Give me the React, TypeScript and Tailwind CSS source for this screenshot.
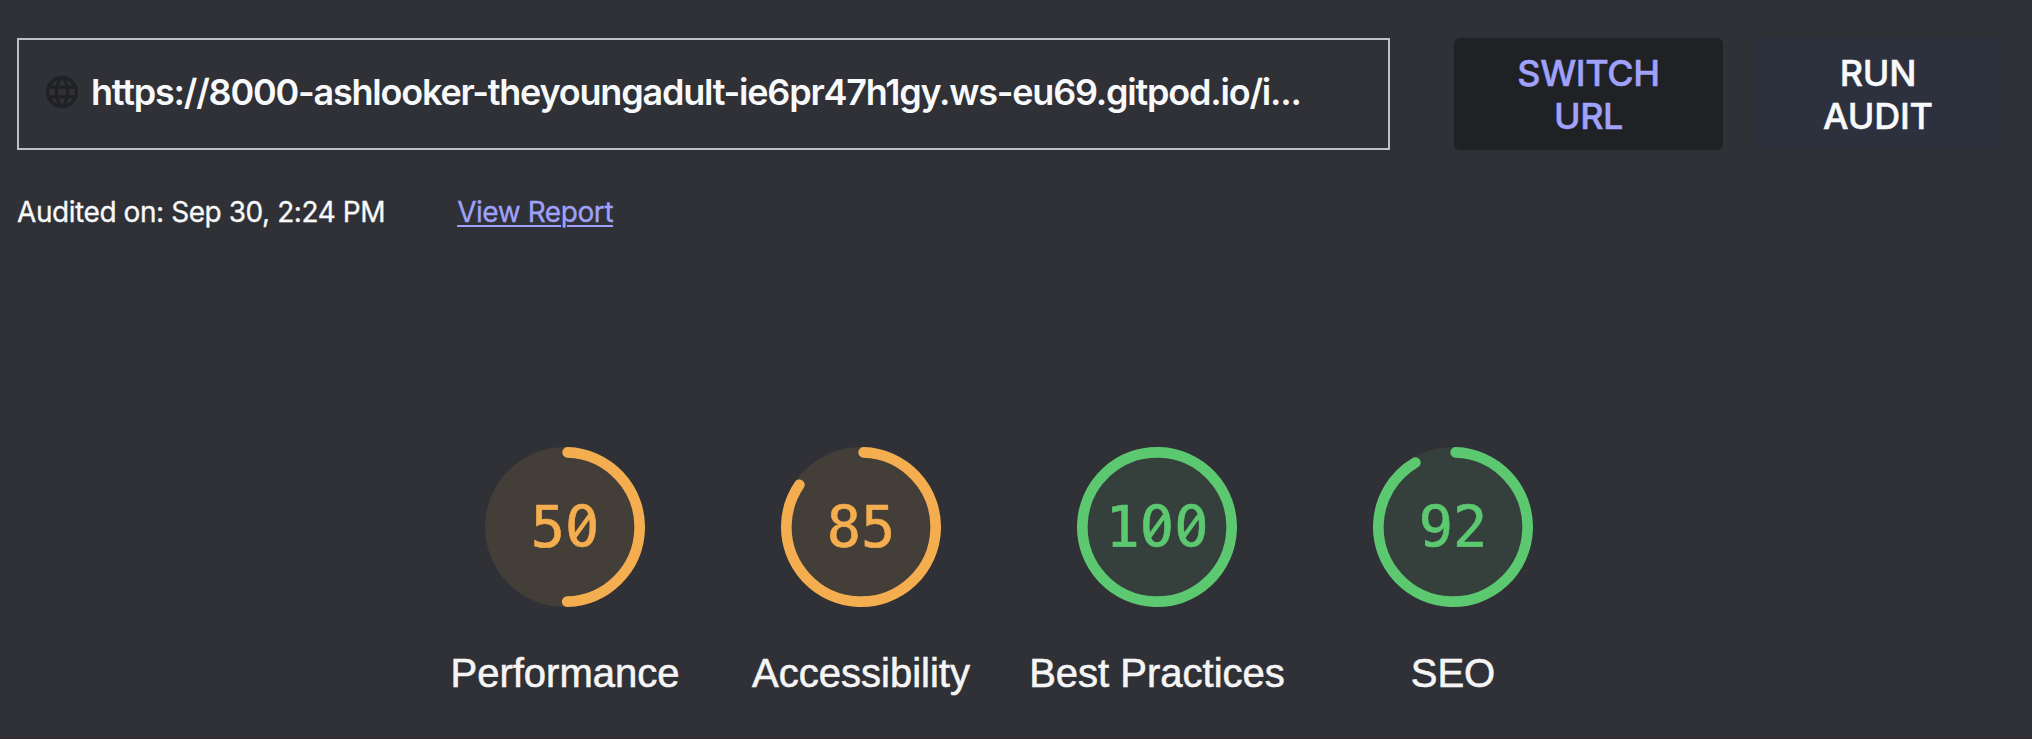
import React from 'react';

const CIRC = 2 * Math.PI * 56;
const DIGIT_ADVANCE = 25.74;

type GaugeProps = { score: number; label: string; tone: 'average' | 'pass' };

function Gauge({ score, label, tone }: GaugeProps) {
  const arc = score === 100 ? CIRC : (score / 100) * CIRC - 4;
  const color = tone === 'pass' ? 'text-[#5cc971]' : 'text-[#f5ae4f]';
  const base = tone === 'pass' ? 'fill-[#35403d]' : 'fill-[#443e39]';
  const digits = String(score).split('');
  return (
    <div className="flex w-[296px] flex-col items-center">
      <svg viewBox="0 0 120 120" className={`size-40 ${color}`}>
        <circle cx="60" cy="60" r="60" className={base} />
        <circle
          cx="60"
          cy="60"
          r="56"
          fill="none"
          stroke="currentColor"
          strokeWidth="8"
          strokeLinecap="round"
          strokeDasharray={`${arc} ${CIRC}`}
          transform="rotate(-87.9537 60 60)"
        />
        <text
          x="60"
          y="75"
          textAnchor="middle"
          fill="currentColor"
          stroke="currentColor"
          strokeWidth="0.5"
          className="font-['DejaVu_Sans_Mono',monospace] text-[42.75px]"
        >
          {score}
        </text>
        {/* slashed zeros */}
        {digits.map((d, i) => {
          if (d !== '0') return null;
          const cx = 60 + (i - (digits.length - 1) / 2) * DIGIT_ADVANCE;
          return (
            <g key={i}>
              <ellipse cx={cx} cy="59.4" rx="4.6" ry="7" className={base} />
              <line
                x1={cx - 5.6}
                y1="67.2"
                x2={cx + 5.6}
                y2="51.6"
                stroke="currentColor"
                strokeWidth="3.2"
              />
            </g>
          );
        })}
      </svg>
      <div className="mt-9 text-[40px] leading-[60px] text-[#f5f5f5] font-['Liberation_Sans',sans-serif] whitespace-nowrap [-webkit-text-stroke:0.6px_#f5f5f5]">
        {label}
      </div>
    </div>
  );
}

export default function App() {
  return (
    <main className="flex h-[739px] w-[2032px] flex-col overflow-hidden border-b-2 border-[#2f2a30] bg-[#303136] font-['Inter',sans-serif] text-[#f8f9fa]">
      <header className="flex h-[150px] pt-[38px] pl-[17px]">
        <div className="flex h-28 w-[1373px] items-center border-2 border-[#bdc1c6] pb-1 pl-[27px]">
          <svg viewBox="2 2 20 20" className="size-8 shrink-0 text-[#202124]" fill="currentColor">
            <path d="M11.99 2C6.47 2 2 6.48 2 12s4.47 10 9.99 10C17.52 22 22 17.52 22 12S17.52 2 11.99 2zm6.93 6h-2.95a15.65 15.65 0 0 0-1.38-3.56A8.03 8.03 0 0 1 18.92 8zM12 4.04c.83 1.2 1.48 2.53 1.91 3.96h-3.82c.43-1.43 1.08-2.76 1.91-3.96zM4.26 14C4.1 13.36 4 12.69 4 12s.1-1.36.26-2h3.38c-.08.66-.14 1.32-.14 2s.06 1.34.14 2H4.26zm.82 2h2.95c.32 1.25.78 2.45 1.38 3.56A7.987 7.987 0 0 1 5.08 16zm2.95-8H5.08a7.987 7.987 0 0 1 4.33-3.56A15.65 15.65 0 0 0 8.03 8zM12 19.96c-.83-1.2-1.48-2.53-1.91-3.96h3.82c-.43 1.43-1.08 2.76-1.91 3.96zM14.34 14H9.66c-.09-.66-.16-1.32-.16-2s.07-1.35.16-2h4.68c.09.65.16 1.32.16 2s-.07 1.34-.16 2zm.25 5.56c.6-1.11 1.06-2.31 1.38-3.56h2.95a8.03 8.03 0 0 1-4.33 3.56zM16.36 14c.08-.66.14-1.32.14-2s-.06-1.34-.14-2h3.38c.16.64.26 1.31.26 2s-.1 1.36-.26 2h-3.38z" />
          </svg>
          <span className="ml-[13px] text-[36px] leading-[44px] font-semibold tracking-[-1.22px] whitespace-nowrap">
            https://8000-ashlooker-theyoungadult-ie6pr47h1gy.ws-eu69.gitpod.io/i...
          </span>
        </div>
        <button className="ml-16 h-28 w-[269px] rounded-md bg-[#202124] pt-0.5 text-center text-[36px] leading-[43px] font-medium tracking-[-0.4px] text-[#9fa1fb] [-webkit-text-stroke:0.5px_#9fa1fb]">
          SWITCH
          <br />
          URL
        </button>
        <button className="ml-[32px] h-28 w-[246px] rounded-md bg-[#2c313d] pt-0.5 text-center text-[36px] leading-[43px] font-medium tracking-[-0.2px] [-webkit-text-stroke:0.5px_#f8f9fa]">
          RUN
          <br />
          AUDIT
        </button>
      </header>
      <div className="mt-[40px] flex h-11 items-center gap-[72px] pl-[17px] text-[28px] tracking-[-0.43px] whitespace-nowrap [-webkit-text-stroke:0.3px_currentColor]">
        <span>Audited on: Sep 30, 2:24 PM</span>
        <a className="text-[#9fa1fb] underline decoration-2 underline-offset-[3px]">View Report</a>
      </div>
      <section className="mt-[213px] ml-[417px] flex">
        <Gauge score={50} label="Performance" tone="average" />
        <Gauge score={85} label="Accessibility" tone="average" />
        <Gauge score={100} label="Best Practices" tone="pass" />
        <Gauge score={92} label="SEO" tone="pass" />
      </section>
    </main>
  );
}
